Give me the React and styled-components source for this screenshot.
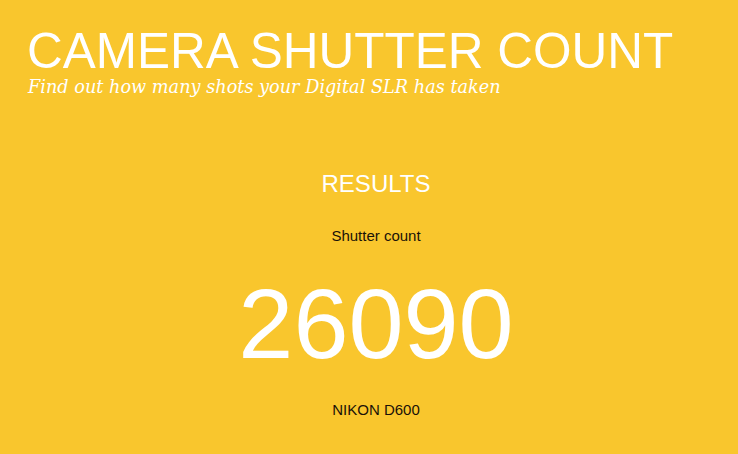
import React from "react";
import styled, { createGlobalStyle } from "styled-components";

const Global = createGlobalStyle`
  html, body { margin: 0; padding: 0; background: #f9c62d; }
  body { font-family: "Liberation Sans", Arial, sans-serif; }
`;

const Page = styled.div`
  width: 738px;
  height: 454px;
  overflow: hidden;
  background: #f9c62d;
  display: flex;
  flex-direction: column;
`;

const Header = styled.header`
  padding: 25px 0 0 27px;
  display: flex;
  flex-direction: column;
`;

const Title = styled.h1`
  margin: 0;
  font-family: "Liberation Sans", Arial, sans-serif;
  font-weight: 400;
  font-size: 49.5px;
  line-height: 52px;
  color: #fff;
`;

const Tagline = styled.p`
  margin: -1px 0 0 1px;
  font-family: "DejaVu Serif", Georgia, serif;
  font-style: italic;
  font-size: 17.7px;
  line-height: 22px;
  color: #fff;
`;

const Results = styled.section`
  display: flex;
  flex-direction: column;
  align-items: center;
  padding: 72px 0 0 14px;
`;

const Heading = styled.h2`
  margin: 0;
  font-weight: 400;
  font-size: 24px;
  line-height: 28px;
  color: #fff;
`;

const Label = styled.div`
  margin-top: ${(p) => p.$mt}px;
  font-size: 15px;
  line-height: 18px;
  color: #1a1208;
`;

const Count = styled.div`
  margin-top: 24px;
  font-size: 99px;
  line-height: 110px;
  color: #fff;
`;

export default function App() {
  return (
    <Page>
      <Global />
      <Header>
        <Title>CAMERA SHUTTER COUNT</Title>
        <Tagline>Find out how many shots your Digital SLR has taken</Tagline>
      </Header>
      <Results>
        <Heading>RESULTS</Heading>
        <Label $mt={29}>Shutter count</Label>
        <Count>26090</Count>
        <Label $mt={22}>NIKON D600</Label>
      </Results>
    </Page>
  );
}
